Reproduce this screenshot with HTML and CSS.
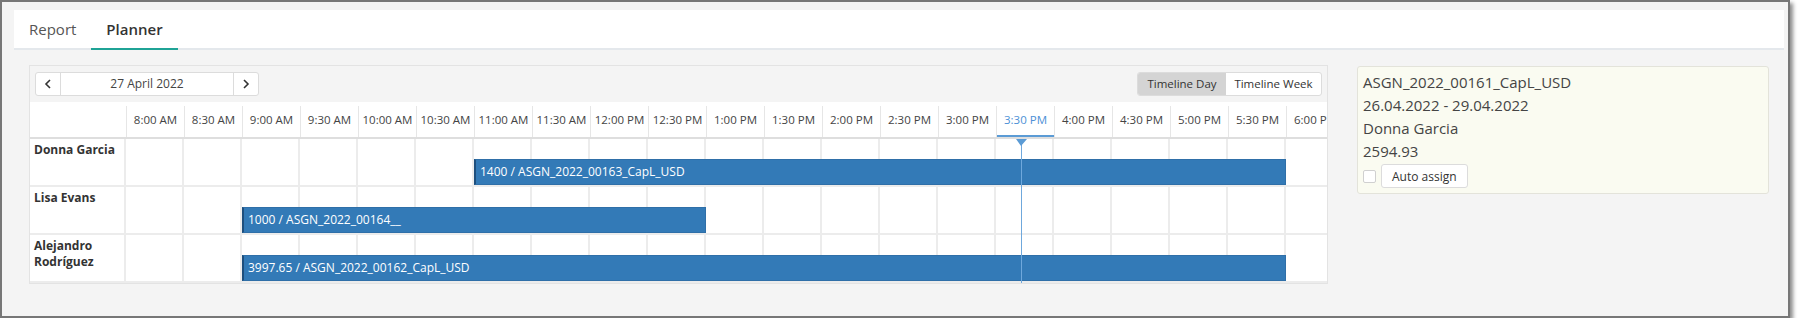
FILE: index.html
```html
<!DOCTYPE html>
<html lang="en">
  <head>
    <meta charset="UTF-8" />
    <title>Planner</title>
    <link rel="stylesheet" href="styles.css">
  </head>
  <body>
    <div class="window">
      <div class="tabs">
        <div class="tab">Report</div>
        <div class="tab active">Planner</div>
      </div>

      <div class="main">
        <div class="scheduler">
          <div class="toolbar">
            <div class="nav">
              <button class="nav-btn" aria-label="Previous">
                <svg width="8" height="10" viewBox="0 0 8 10"><polyline points="6,1 2,5 6,9" fill="none" stroke="#333" stroke-width="1.6"/></svg>
              </button>
              <div class="nav-date">27 April 2022</div>
              <button class="nav-btn" aria-label="Next">
                <svg width="8" height="10" viewBox="0 0 8 10"><polyline points="2,1 6,5 2,9" fill="none" stroke="#333" stroke-width="1.6"/></svg>
              </button>
            </div>
            <div class="views">
              <div class="view selected">Timeline Day</div>
              <div class="view">Timeline Week</div>
            </div>
          </div>

          <div class="grid">
            <div class="hrow">
              <div class="hres"></div>
              <div class="hcell">8:00 AM</div>
              <div class="hcell">8:30 AM</div>
              <div class="hcell">9:00 AM</div>
              <div class="hcell">9:30 AM</div>
              <div class="hcell">10:00 AM</div>
              <div class="hcell">10:30 AM</div>
              <div class="hcell">11:00 AM</div>
              <div class="hcell">11:30 AM</div>
              <div class="hcell">12:00 PM</div>
              <div class="hcell">12:30 PM</div>
              <div class="hcell">1:00 PM</div>
              <div class="hcell">1:30 PM</div>
              <div class="hcell">2:00 PM</div>
              <div class="hcell">2:30 PM</div>
              <div class="hcell">3:00 PM</div>
              <div class="hcell current">3:30 PM</div>
              <div class="hcell">4:00 PM</div>
              <div class="hcell">4:30 PM</div>
              <div class="hcell">5:00 PM</div>
              <div class="hcell">5:30 PM</div>
              <div class="hcell">6:00 PM</div>
            </div>

            <div class="row">
              <div class="res">Donna Garcia</div>
              <div class="lane">
                <div class="event" style="grid-column: 7 / 21">1400 / ASGN_2022_00163_CapL_USD</div>
              </div>
            </div>
            <div class="row">
              <div class="res">Lisa Evans</div>
              <div class="lane">
                <div class="event" style="grid-column: 3 / 11">1000 / ASGN_2022_00164__</div>
              </div>
            </div>
            <div class="row">
              <div class="res">Alejandro Rodríguez</div>
              <div class="lane">
                <div class="event" style="grid-column: 3 / 21">3997.65 / ASGN_2022_00162_CapL_USD</div>
              </div>
            </div>

            <!-- current time marker -->
            <div class="now-arrow" style="left: 986px"></div>
            <div class="now-line" style="left: 991px"></div>
          </div>
        </div>

        <div class="details">
          <div>ASGN_2022_00161_CapL_USD</div>
          <div>26.04.2022 - 29.04.2022</div>
          <div>Donna Garcia</div>
          <div>2594.93</div>
          <div class="assign">
            <span class="check"></span>
            <button class="btn">Auto assign</button>
          </div>
        </div>
      </div>
    </div>
  </body>
</html>
```

FILE: styles.css
```css
* {
  box-sizing: border-box;
}

body {
  margin: 0;
  background-color: white;
  font-family: "Open Sans", "Noto Sans", Arial, sans-serif;
  color: #333;
}

.window {
  width: 1790px;
  height: 318px;
  border: 2px solid #777;
  background-color: #f4f4f4;
  box-shadow: 3px 3px 4px rgba(0, 0, 0, 0.45);
  padding: 8px 4px 0 12px;
}

.tabs {
  display: flex;
  height: 40px;
  background-color: white;
  border-bottom: 2px solid #e4e8ec;
}

.tab {
  padding: 0 15px;
  font-size: 15px;
  line-height: 38px;
  color: #555;
}

.tab.active {
  color: #333;
  font-weight: 600;
  border-bottom: 2px solid #1fa396;
  margin-bottom: -2px;
}

.main {
  display: flex;
  gap: 29px;
  padding: 15px 0 0 15px;
}

/* scheduler */
.scheduler {
  width: 1299px;
  flex: none;
  border: 1px solid #e3e3e3;
  overflow: hidden;
  background-color: #f4f4f4;
}

.toolbar {
  display: flex;
  justify-content: space-between;
  align-items: center;
  height: 36px;
  padding: 0 5px 0 5px;
}

.nav {
  display: flex;
  height: 24px;
  border: 1px solid #dcdcdc;
  border-radius: 3px;
  background-color: white;
}

.nav-btn {
  width: 24px;
  padding: 0;
  border: none;
  background: none;
  display: flex;
  align-items: center;
  justify-content: center;
}

.nav-date {
  width: 174px;
  border-left: 1px solid #dcdcdc;
  border-right: 1px solid #dcdcdc;
  font-size: 12px;
  line-height: 22px;
  text-align: center;
  color: #444;
}

.views {
  display: flex;
  height: 24px;
  border: 1px solid #dcdcdc;
  border-radius: 3px;
  background-color: white;
  overflow: hidden;
}

.view {
  width: 95px;
  font-size: 11.5px;
  line-height: 22px;
  text-align: center;
  color: #333;
  white-space: nowrap;
}

.view.selected {
  width: 88px;
  background-color: #d4d4d4;
}

.grid {
  position: relative;
}

.hrow {
  display: flex;
  height: 37px;
  background-color: white;
  border-bottom: 2px solid #dedede;
}

.hres {
  width: 96px;
  flex: none;
}

.hcell {
  width: 58px;
  flex: none;
  margin-top: 4px;
  border-left: 1px solid #e6e6e6;
  display: flex;
  align-items: center;
  justify-content: center;
  font-size: 11.5px;
  color: #444;
  white-space: nowrap;
  padding-bottom: 4px;
}

.hcell.current {
  color: #4d90d6;
  box-shadow: inset 0 -2px 0 #5b9bd5;
}

.row {
  display: flex;
  height: 48px;
  border-bottom: 2px solid #ececec;
  background-color: white;
}

.res {
  width: 96px;
  flex: none;
  border-right: 2px solid #ececec;
  padding: 3px 4px;
  font-size: 12px;
  font-weight: 700;
  line-height: 16px;
  color: #333;
}

.lane {
  width: 1218px;
  flex: none;
  display: grid;
  grid-template-columns: repeat(21, 58px);
  background-image: repeating-linear-gradient(to right, transparent 0 56px, #ececec 56px 58px);
}

.event {
  grid-row: 1;
  align-self: end;
  height: 26px;
  background-color: #337ab7;
  border: 1px solid #2f6fa8;
  border-left: 2px solid #1e4f7d;
  color: white;
  font-size: 12px;
  line-height: 24px;
  padding-left: 4px;
  white-space: nowrap;
  overflow: hidden;
}

.now-line {
  position: absolute;
  top: 37px;
  bottom: 0;
  width: 1px;
  background-color: #6fa8dc;
}

.now-arrow {
  position: absolute;
  top: 37px;
  width: 0;
  height: 0;
  border-left: 5px solid transparent;
  border-right: 6px solid transparent;
  border-top: 7px solid #5b9bd5;
  z-index: 1;
}

/* details panel */
.details {
  width: 412px;
  flex: none;
  align-self: flex-start;
  margin-top: 1px;
  background-color: #fafbf1;
  border: 1px solid #e3e3da;
  border-radius: 3px;
  padding: 4px 5px 5px;
  font-size: 15px;
  line-height: 23px;
  color: #444;
}

.assign {
  display: flex;
  align-items: center;
  gap: 5px;
  margin-top: 1px;
}

.check {
  width: 13px;
  height: 13px;
  border: 1px solid #d0d0d0;
  border-radius: 2px;
  background-color: white;
}

.btn {
  height: 24px;
  padding: 0 10px;
  border: 1px solid #dcdcdc;
  border-radius: 3px;
  background-color: white;
  font-family: inherit;
  font-size: 12px;
  color: #333;
}
```
